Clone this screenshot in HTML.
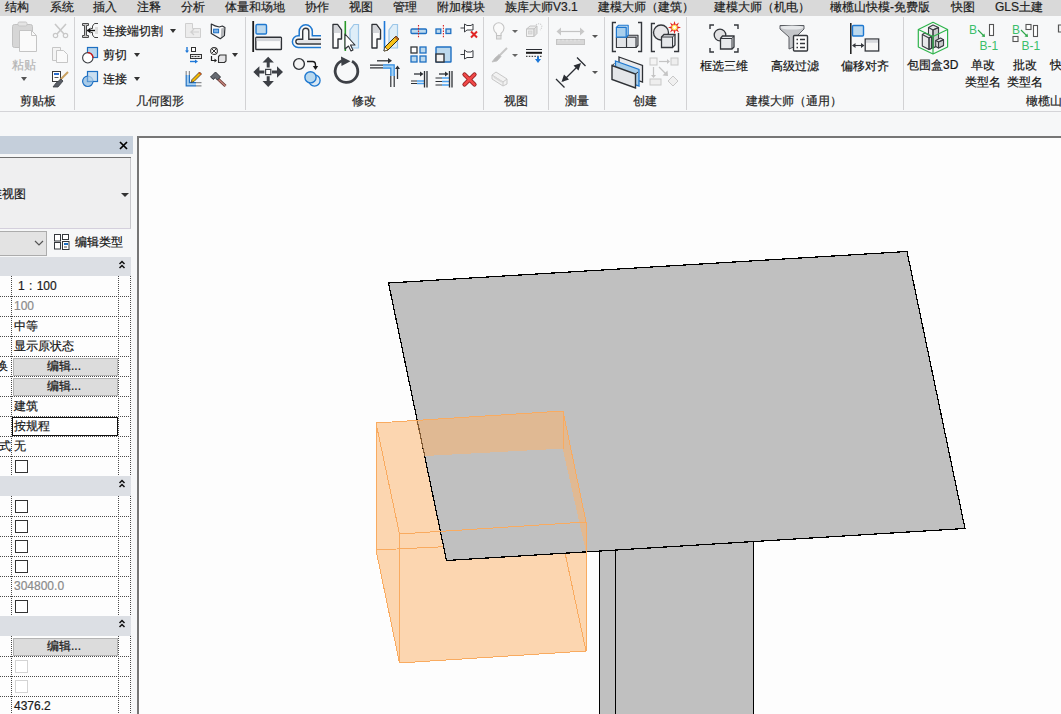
<!DOCTYPE html>
<html><head><meta charset="utf-8">
<style>
html,body{margin:0;padding:0;width:1061px;height:714px;overflow:hidden;background:#f6f7f8;font-family:"Liberation Sans",sans-serif;font-size:12px;color:#222;}
.a{position:absolute;white-space:nowrap;}
#tabs{position:absolute;left:0;top:0;width:1061px;height:16px;background:#d9d9d9;}
.tab{position:absolute;top:0;line-height:14px;font-size:12px;color:#1e1e1e;}
#ribbon{position:absolute;left:0;top:16px;width:1061px;height:95px;background:#f7f8f9;}
#rline{position:absolute;left:0;top:111px;width:1061px;height:1px;background:#d4d4d8;}
.sep{position:absolute;top:17px;width:1px;height:93px;background:#d2d2d4;}
.lbl{position:absolute;top:94px;white-space:nowrap;line-height:14px;font-size:12px;color:#262626;}
.t{position:absolute;white-space:nowrap;line-height:14px;font-size:12px;color:#141414;}
.dd{position:absolute;width:0;height:0;border-left:3.5px solid transparent;border-right:3.5px solid transparent;border-top:4px solid #333;}
svg{position:absolute;overflow:visible;}
.tab,.lbl,.t{-webkit-text-stroke:0.2px currentColor;}
</style></head><body>
<div id="tabs">
<span class="tab" style="left:5px">结构</span>
<span class="tab" style="left:50px">系统</span>
<span class="tab" style="left:93px">插入</span>
<span class="tab" style="left:137px">注释</span>
<span class="tab" style="left:181px">分析</span>
<span class="tab" style="left:225px">体量和场地</span>
<span class="tab" style="left:305px">协作</span>
<span class="tab" style="left:349px">视图</span>
<span class="tab" style="left:393px">管理</span>
<span class="tab" style="left:437px">附加模块</span>
<span class="tab" style="left:505px">族库大师V3.1</span>
<span class="tab" style="left:598px">建模大师（建筑）</span>
<span class="tab" style="left:714px">建模大师（机电）</span>
<span class="tab" style="left:830px">橄榄山快模-免费版</span>
<span class="tab" style="left:951px">快图</span>
<span class="tab" style="left:995px">GLS土建</span>
</div>
<div id="ribbon"></div>
<div id="rline"></div>
<div class="sep" style="left:74px"></div>
<div class="sep" style="left:245px"></div>
<div class="sep" style="left:483px"></div>
<div class="sep" style="left:548px"></div>
<div class="sep" style="left:604px"></div>
<div class="sep" style="left:686px"></div>
<div class="sep" style="left:903px"></div>
<span class="lbl" style="left:20px">剪贴板</span>
<span class="lbl" style="left:136px">几何图形</span>
<span class="lbl" style="left:352px">修改</span>
<span class="lbl" style="left:504px">视图</span>
<span class="lbl" style="left:565px">测量</span>
<span class="lbl" style="left:633px">创建</span>
<span class="lbl" style="left:746px">建模大师（通用）</span>
<span class="lbl" style="left:1026px">橄榄山</span>

<!-- ICONS -->

<!-- clipboard panel -->
<svg style="left:11px;top:21px" width="28" height="32" viewBox="0 0 28 32">
 <rect x="1.5" y="3.5" width="20" height="23" rx="2" fill="#d6d6d6" stroke="#c2c2c2"/>
 <rect x="7" y="1" width="9" height="4" rx="1.5" fill="#e4e4e4" stroke="#c6c6c6"/>
 <path d="M8.5 9.5 H20.5 L25.5 14.5 V30.5 H8.5 Z" fill="#fafafa" stroke="#c4c4c4"/>
 <path d="M20.5 9.5 V14.5 H25.5" fill="none" stroke="#c4c4c4"/>
</svg>
<span class="t" style="left:12px;top:58px;color:#b4b4b4">粘贴</span>
<div class="dd" style="left:21px;top:77px;border-top-color:#555"></div>
<svg style="left:52px;top:22px" width="17" height="17" viewBox="0 0 17 17">
 <path d="M3 2 L12 12 M14 2 L5 12" stroke="#c8c8c8" stroke-width="1.6" fill="none"/>
 <circle cx="3.5" cy="13.5" r="2.2" fill="none" stroke="#c8c8c8" stroke-width="1.2"/>
 <circle cx="13.5" cy="13.5" r="2.2" fill="none" stroke="#c8c8c8" stroke-width="1.2"/>
</svg>
<svg style="left:51px;top:46px" width="18" height="17" viewBox="0 0 18 17">
 <path d="M1.5 1.5 H9.5 V14.5 H1.5 Z" fill="#f4f4f4" stroke="#c6c6c6"/>
 <path d="M5.5 4.5 H12.5 L16.5 8.5 V16.5 H5.5 Z" fill="#fafafa" stroke="#c6c6c6"/>
</svg>
<svg style="left:52px;top:71px" width="17" height="17" viewBox="0 0 17 17">
 <rect x="0.5" y="0.5" width="8" height="10" fill="#fff" stroke="#3a3a3a"/>
 <rect x="2" y="2" width="5" height="2" fill="#2d6fd0"/>
 <path d="M2.5 6.5 H6.5" stroke="#555" stroke-width="1"/>
 <path d="M16 1 L8 9" stroke="#c8a060" stroke-width="2"/>
 <path d="M9 8 L11 10 L6 16 L1 16 L4 12 Z" fill="#5a5e66" stroke="#3a3d42" stroke-width="0.8"/>
</svg>

<!-- geometry panel -->
<svg style="left:82px;top:23px" width="17" height="16" viewBox="0 0 17 16">
 <path d="M0.5 0.5 H6.5 V2.5 H4.5 V12.5 H6.5 V14.5 H0.5 V12.5 H2.5 V2.5 H0.5 Z" fill="#c8c8c8" stroke="#4a4a4a" stroke-width="1"/>
 <path d="M5 7.5 H14" stroke="#111" stroke-width="1.4"/>
 <path d="M5 7.5 L8.5 4.5 V10.5 Z" fill="#111"/>
 <path d="M16 0.5 H12.5 L10.5 3 V5.5 H9 M9 9.5 H10.5 V12 L12.5 14.5 H16" fill="none" stroke="#444" stroke-width="1"/>
 <rect x="13" y="4" width="3" height="7" fill="#dcdcdc"/>
</svg>
<span class="t" style="left:103px;top:24px">连接端切割</span>
<div class="dd" style="left:170px;top:29px"></div>
<svg style="left:82px;top:47px" width="17" height="17" viewBox="0 0 17 17">
 <rect x="5.5" y="0.5" width="10" height="10" fill="#b9d5ec" stroke="#1d6fc2" stroke-width="1.2"/>
 <circle cx="5.8" cy="10.8" r="5.2" fill="#fff" stroke="#3a3d42" stroke-width="1.1"/>
 <path d="M5.8 5.6 A5.2 5.2 0 0 1 11 10.8" fill="none" stroke="#e01010" stroke-width="1.3"/>
</svg>
<span class="t" style="left:103px;top:48px">剪切</span>
<div class="dd" style="left:134px;top:53px"></div>
<svg style="left:82px;top:71px" width="17" height="17" viewBox="0 0 17 17">
 <circle cx="5.8" cy="10.3" r="5.2" fill="#a9cbe8" stroke="#1d6fc2" stroke-width="1.2"/>
 <rect x="5.5" y="0.5" width="10" height="10" fill="#b9d5ec" fill-opacity="0.75" stroke="#1d6fc2" stroke-width="1.2"/>
 <path d="M5.5 5.5 V10.5 H10.9" fill="none" stroke="#6fa6d8" stroke-width="0.8"/>
</svg>
<span class="t" style="left:103px;top:72px">连接</span>
<div class="dd" style="left:134px;top:77px"></div>

<svg style="left:185px;top:23px" width="17" height="16" viewBox="0 0 17 16">
 <path d="M0.5 0.5 H7.5 V5.5 H15.5 V14.5 H0.5 Z" fill="#ececec" stroke="#cfcfcf"/>
 <path d="M14 9 H6 L9 6 M6 9 L9 12" fill="none" stroke="#d0d0d0" stroke-width="1.2"/>
</svg>
<svg style="left:210px;top:23px" width="16" height="17" viewBox="0 0 16 17">
 <path d="M1.3 1 Q5 3.2 9.3 4 L12.3 3 L14.9 4.6 L14.4 12.6 L10.3 15.7 L1.3 10.6 Z" fill="#fbfbfb" stroke="#2e3136" stroke-width="1.2" stroke-linejoin="round"/>
 <path d="M11.2 5.5 L14.2 4.8 L13.8 12.3 L10.8 14.6 Z" fill="#b4b6ba"/>
 <rect x="3.6" y="6.2" width="5" height="3.6" fill="#7fb2e6" stroke="#1e6fc2" stroke-width="1"/>
</svg>
<svg style="left:185px;top:47px" width="17" height="16" viewBox="0 0 17 16">
 <path d="M2 0 V5" stroke="#1e78d8" stroke-width="1.4"/><path d="M0 3.5 L2 6 L4 3.5 Z" fill="#1e78d8"/>
 <rect x="6.5" y="0.5" width="4" height="4" fill="#fff" stroke="#333"/>
 <rect x="5.5" y="7.5" width="11" height="4" fill="#e8e8e8" stroke="#333"/>
 <path d="M6.5 9.5 H15.5" stroke="#333" stroke-dasharray="2 1"/>
 <path d="M5 14.5 H11" stroke="#1e78d8" stroke-width="1.4"/><path d="M10 12.5 L13 14.5 L10 16.5 Z" fill="#1e78d8"/>
</svg>
<svg style="left:210px;top:47px" width="17" height="16" viewBox="0 0 17 16">
 <circle cx="4" cy="4" r="3.4" fill="#fff" stroke="#333" stroke-width="1.1"/>
 <path d="M2 2 L6 6 M6 2 L2 6" stroke="#333" stroke-width="1"/>
 <path d="M1.5 9 V13.5 H5" fill="none" stroke="#222" stroke-width="1.2"/><path d="M4.5 11.5 L7 13.5 L4.5 15.5 Z" fill="#222"/>
 <path d="M8.5 9.5 L10 8 H16 V14 L14.5 15.5 H8.5 Z" fill="#e4e4e6" stroke="#333" stroke-width="1.1"/>
</svg>
<div class="dd" style="left:232px;top:53px"></div>
<svg style="left:185px;top:71px" width="17" height="16" viewBox="0 0 17 16">
 <path d="M2.75 4 V13.25 H11" fill="none" stroke="#a8d0f0" stroke-width="2.4"/>
 <path d="M1.2 4 V14.8 H11 M4.4 4 V11.6 H11" fill="none" stroke="#1e6fc2" stroke-width="1.2"/>
 <path d="M1.2 0 V4 M4.4 0 V4 M11 11.6 H16.5 M11 14.8 H16.5" stroke="#8a8c90" stroke-width="1.2"/>
 <path d="M14.5 1 L16.5 3 L9 10.5 L6 11.5 L7 8.5 Z" fill="#f5b800" stroke="#3a3a3a" stroke-width="0.8"/>
 <path d="M14.5 1 L16.5 3 L15.5 4 L13.5 2 Z" fill="#d0501a"/>
</svg>
<svg style="left:210px;top:71px" width="17" height="16" viewBox="0 0 17 16">
 <path d="M7.5 7.5 L15.5 15" stroke="#6a3a34" stroke-width="3"/>
 <path d="M7.5 7.5 L15.5 15" stroke="#c88880" stroke-width="1.2"/>
 <path d="M0.5 6 L5.5 1 L10.5 6 L7.5 9 L5 6.5 L3.5 8.5 Z" fill="#676b72" stroke="#33363b" stroke-width="1"/>
</svg>



<!-- modify panel -->
<svg style="left:250px;top:20px" width="34" height="33" viewBox="0 0 34 33">
 <path d="M3.2 1 V32" stroke="#1a1a1a" stroke-width="1.8"/>
 <rect x="6" y="4.5" width="10.5" height="9.5" rx="1.2" fill="#bcd9ee" stroke="#1e78d0" stroke-width="1.4"/>
 <rect x="5.8" y="17.3" width="25.6" height="12.2" rx="0.8" fill="#fbfbfb" stroke="#2e3136" stroke-width="1.4"/>
 <rect x="6.6" y="18.1" width="24" height="3" fill="#d4d6da"/>
</svg>
<svg style="left:290px;top:23.5px" width="34" height="28" viewBox="0 0 34 28">
 <path d="M31 17.6 H8" stroke="#e2e3e6" stroke-width="3"/>
 <path d="M31 11.8 H22.3 V7.3 A6.55 6.55 0 0 0 9.2 7.3 V11.8 H8.25 A5.85 5.85 0 0 0 8.25 23.5 H31" fill="none" stroke="#1e78d0" stroke-width="1.5"/>
 <path d="M31 15.2 H18.8 V7.25 A3.05 3.05 0 0 0 12.7 7.25 V15.2 H8.25 A2.4 2.4 0 0 0 8.25 20 H31" fill="none" stroke="#34373c" stroke-width="1.4"/>
</svg>
<svg style="left:330px;top:20px" width="32" height="33" viewBox="0 0 32 33">
 <path d="M3 4.5 H7.5 L11.5 10 V19 H8 V28 H3 Z" fill="#fcfcfc" stroke="#2e3136" stroke-width="1.4" stroke-linejoin="round"/>
 <path d="M3.8 5.3 H7.2 L10.7 10.3 V13 H3.8 Z" fill="#d4d6da"/>
 <path d="M15.3 1 V31" stroke="#2a9a2a" stroke-width="1.6"/>
 <path d="M28.5 4.5 H24 L20 10 V28 H28.5 Z" fill="#dfeef8" stroke="#9cc6e8" stroke-width="1.2"/>
 <path d="M15 14 V29 L18.5 26 L21 31 L23 30 L20.5 25 H25 Z" fill="#fff" stroke="#2e3136" stroke-width="1.1" stroke-linejoin="round"/>
</svg>
<svg style="left:369px;top:20px" width="32" height="33" viewBox="0 0 32 33">
 <path d="M3 4.5 H7.5 L11.5 10 V19 H8 V28 H3 Z" fill="#fcfcfc" stroke="#2e3136" stroke-width="1.4" stroke-linejoin="round"/>
 <path d="M3.8 5.3 H7.2 L10.7 10.3 V13 H3.8 Z" fill="#d4d6da"/>
 <path d="M15.5 1 V31" stroke="#1e78d8" stroke-width="1.6"/>
 <path d="M28.5 4.5 H24 L20 10 V28 H28.5 Z" fill="#dfeef8" stroke="#9cc6e8" stroke-width="1.2"/>
 <path d="M27 16 L30 19 L19 30 L15 31 L16 27 Z" fill="#f7c21a" stroke="#3a2e10" stroke-width="1"/>
 <path d="M27 16 L30 19 L28.5 20.5 L25.5 17.5 Z" fill="#b5652a"/>
 <path d="M16 27 L19 30 L15 31 Z" fill="#fff" stroke="#3a2e10" stroke-width="0.6"/>
</svg>
<svg style="left:252px;top:56px" width="32" height="32" viewBox="0 0 32 32">
 <path d="M16.2 0.8 L21.9 6.6 H17.7 V11.6 H14.7 V6.6 H10.5 Z M16.2 31 L21.9 25 H17.7 V20.3 H14.7 V25 H10.5 Z M1.3 16 L7.4 10.3 V14.5 H12.4 V17.5 H7.4 V21.7 Z M31 16 L25 10.3 V14.5 H20 V17.5 H25 V21.7 Z" fill="#3d4046"/>
 <rect x="13.6" y="13.4" width="5.2" height="5.2" fill="#fff" stroke="#3d4046" stroke-width="1.2"/>
</svg>
<svg style="left:291px;top:57px" width="32" height="31" viewBox="0 0 32 31">
 <circle cx="8" cy="7" r="5.4" fill="#f4f4f4" stroke="#2e3136" stroke-width="1.4"/>
 <path d="M16 4.5 H21.5 Q24.5 4.5 24.5 8 V10" fill="none" stroke="#1a1a1a" stroke-width="1.4"/>
 <path d="M21.8 9 L24.5 13 L27.2 9 Z" fill="#1a1a1a"/>
 <circle cx="23.5" cy="23.5" r="5.6" fill="#dbe8f2" stroke="#1e78d0" stroke-width="1.3"/>
 <circle cx="19.5" cy="20.3" r="5.6" fill="#b8d8ee" stroke="#1e78d0" stroke-width="1.4"/>
</svg>
<svg style="left:331px;top:55px" width="32" height="32" viewBox="0 0 32 32">
 <path d="M21 6.3 A11.3 11.3 0 1 1 11 5.8" fill="none" stroke="#3d4046" stroke-width="2.8"/>
 <path d="M10 1.5 L19.5 6.2 L10.5 11 Z" fill="#3d4046"/>
</svg>
<svg style="left:369px;top:57px" width="32" height="31" viewBox="0 0 32 31">
 <path d="M8 3.8 H20" stroke="#2e3136" stroke-width="1.3"/><path d="M19 1 L23 3.8 L19 6.6 Z" fill="#2e3136"/>
 <path d="M1 8.2 H14 M1 10.8 H14" stroke="#2e3136" stroke-width="1.2"/>
 <path d="M14 9.5 H23.5 V19" fill="none" stroke="#a6d2f4" stroke-width="3"/>
 <path d="M14 7.8 H25.2 V19 M14 11.2 H21.8 V19" fill="none" stroke="#2a88e0" stroke-width="1.2"/>
 <path d="M21.8 19 V30 M25.2 19 V30" stroke="#2e3136" stroke-width="1.2"/>
 <path d="M28.5 22 V10.5" stroke="#2e3136" stroke-width="1.3"/><path d="M26 12 L28.5 8.5 L31 12 Z" fill="#2e3136"/>
</svg>

<svg style="left:410px;top:25px" width="18" height="13" viewBox="0 0 18 13">
 <rect x="1" y="4" width="15.5" height="4.5" rx="1" fill="#bcd9ee" stroke="#1e6fc2" stroke-width="1.3"/>
 <path d="M8.5 0 V13" stroke="#d82020" stroke-width="1.1" stroke-dasharray="1.5 1.2"/>
</svg>
<svg style="left:435px;top:25px" width="18" height="13" viewBox="0 0 18 13">
 <rect x="1" y="4" width="4.8" height="4.5" fill="#bcd9ee" stroke="#1e6fc2" stroke-width="1.3"/>
 <rect x="11" y="4" width="4.8" height="4.5" fill="#bcd9ee" stroke="#1e6fc2" stroke-width="1.3"/>
 <path d="M8.4 0 V13" stroke="#d82020" stroke-width="1.1" stroke-dasharray="1.5 1.2"/>
</svg>
<svg style="left:460px;top:22px" width="18" height="17" viewBox="0 0 18 17">
 <path d="M0.5 6 H4.5 M4.5 2 V10 L7 8 H13 V2 L11 3.5 H7 Z" fill="#fff" stroke="#3a3d42" stroke-width="1"/>
 <path d="M11 9.5 L17 15.5 M17 9.5 L11 15.5" stroke="#e02424" stroke-width="2"/>
</svg>
<svg style="left:410px;top:46px" width="18" height="17" viewBox="0 0 18 17">
 <rect x="1" y="1" width="6" height="6" fill="#fff" stroke="#33363b" stroke-width="1.3"/>
 <rect x="10" y="1" width="6" height="6" fill="#bcd9ee" stroke="#1e6fc2" stroke-width="1.3"/>
 <rect x="1" y="10" width="6" height="6" fill="#bcd9ee" stroke="#1e6fc2" stroke-width="1.3"/>
 <rect x="10" y="10" width="6" height="6" fill="#bcd9ee" stroke="#1e6fc2" stroke-width="1.3"/>
</svg>
<svg style="left:435px;top:46px" width="18" height="17" viewBox="0 0 18 17">
 <rect x="1" y="1" width="15" height="15" rx="0.5" fill="#bcd9ee" stroke="#1e6fc2" stroke-width="1.4"/>
 <rect x="1" y="8" width="8" height="8" fill="#f2f2f2" stroke="#33363b" stroke-width="1.4"/>
</svg>
<svg style="left:460px;top:49px" width="18" height="13" viewBox="0 0 18 13">
 <path d="M0.5 5.5 H4.5 M4.5 1 V10 L7 8.5 H13 V1.5 L11 3 H7 Z" fill="#fff" stroke="#3a3d42" stroke-width="1"/>
</svg>
<svg style="left:410px;top:71px" width="18" height="17" viewBox="0 0 18 17">
 <path d="M4 3 H11" stroke="#2e3136" stroke-width="1.3"/><path d="M10 0.5 L13.5 3 L10 5.5 Z" fill="#2e3136"/>
 <path d="M1 10 H7 M1 12.5 H7" stroke="#2e3136" stroke-width="1.2"/>
 <path d="M7 10 H14 M7 12.5 H14" stroke="#4aa0f0" stroke-width="1.6"/>
 <path d="M14.5 0 V16.5 M17 0 V16.5" stroke="#2e3136" stroke-width="1.3"/>
</svg>
<svg style="left:435px;top:71px" width="18" height="17" viewBox="0 0 18 17">
 <path d="M4 3 H11" stroke="#2e3136" stroke-width="1.3"/><path d="M10 0.5 L13.5 3 L10 5.5 Z" fill="#2e3136"/>
 <path d="M0.5 7 H7 M0.5 10.5 H7 M0.5 14 H7" stroke="#2e3136" stroke-width="1.2"/>
 <path d="M7 7 H14 M7 10.5 H14 M7 14 H14" stroke="#4aa0f0" stroke-width="1.6"/>
 <path d="M14.5 0 V16.5 M17 0 V16.5" stroke="#2e3136" stroke-width="1.3"/>
</svg>
<svg style="left:462px;top:72px" width="15" height="15" viewBox="0 0 15 15">
 <path d="M2.5 2.5 L12.5 12.5 M12.5 2.5 L2.5 12.5" stroke="#8a1a1a" stroke-width="4.2" stroke-linecap="round"/>
 <path d="M2.5 2.5 L12.5 12.5 M12.5 2.5 L2.5 12.5" stroke="#f04848" stroke-width="2.6" stroke-linecap="round"/>
</svg>


<!-- view panel -->
<svg style="left:492px;top:22px" width="14" height="18" viewBox="0 0 14 18">
 <path d="M4.5 11.5 Q1.5 9 1.5 6 A5.2 5.2 0 0 1 12 6 Q12 9 9 11.5 V13.5 H4.5 Z" fill="#fafafa" stroke="#c4c4c4" stroke-width="1.1"/>
 <rect x="4.5" y="13.5" width="4.5" height="3.5" fill="#e4e4e4" stroke="#c4c4c4"/>
</svg>
<div class="dd" style="left:512px;top:30px;border-left-width:3px;border-right-width:3px;border-top-width:3.5px;border-top-color:#666"></div>
<svg style="left:525px;top:22px" width="18" height="16" viewBox="0 0 18 16">
 <path d="M1.5 7 L5 4 H12 L9 7 Z" fill="#ececec" stroke="#c4c4c4"/>
 <path d="M1.5 7 H9 V14.5 H1.5 Z" fill="#f2f2f2" stroke="#c4c4c4"/>
 <path d="M9 7 L12 4 V11.5 L9 14.5 Z" fill="#dedede" stroke="#c4c4c4"/>
 <rect x="3.5" y="9" width="3.5" height="3" fill="#e0e0e0" stroke="#cfcfcf" stroke-width="0.8"/>
 <path d="M11 3 Q14 0.5 16.5 3 Q17.5 6 15 8" fill="none" stroke="#cfcfcf" stroke-width="1.2" stroke-dasharray="1.2 1"/>
</svg>
<svg style="left:491px;top:47px" width="17" height="16" viewBox="0 0 17 16">
 <path d="M16 1 L8 9" stroke="#c6c6c6" stroke-width="2"/>
 <path d="M8 7.5 L10 9.5 L6 14 L1 15 L4 11 Z" fill="#b8b8b8" stroke="#c0c0c0" stroke-width="0.8"/>
</svg>
<div class="dd" style="left:512px;top:54px;border-left-width:3px;border-right-width:3px;border-top-width:3.5px;border-top-color:#666"></div>
<svg style="left:525px;top:48px" width="18" height="16" viewBox="0 0 18 16">
 <path d="M1 1.5 H17" stroke="#2a2d33" stroke-width="1"/>
 <path d="M1 4.8 H17" stroke="#1a1a1a" stroke-width="2"/>
 <path d="M1 8.3 H17" stroke="#1a1a1a" stroke-width="1" stroke-dasharray="1.5 1.3"/>
 <path d="M13 8.5 V12" stroke="#1e78d8" stroke-width="2"/><path d="M10 11 L13 15 L16 11 Z" fill="#1e78d8"/>
</svg>
<svg style="left:491px;top:70px" width="17" height="17" viewBox="0 0 17 17">
 <path d="M1 5 L5 2 L16 9 V14 L12 16 L1 9 Z" fill="#f2f2f2" stroke="#c8c8c8"/>
 <path d="M1 5 L12 12 V16 M12 12 L16 9" fill="none" stroke="#c8c8c8"/>
 <path d="M3 7 L11 12" stroke="#dadada" stroke-width="2"/>
</svg>

<!-- measure -->
<svg style="left:555px;top:26px" width="32" height="20" viewBox="0 0 32 20">
 <path d="M4 5.5 H27" stroke="#c4c4c4" stroke-width="1.2"/>
 <path d="M1.5 5.5 L6 1.5 V9.5 Z M29.5 5.5 L25 1.5 V9.5 Z" fill="#c8c8c8"/>
 <rect x="1.5" y="13.5" width="28" height="5" fill="#d8d8d8" stroke="#c4c4c4"/>
 <path d="M4 13.5 V15.5 M8 13.5 V15 M12 13.5 V15.5 M16 13.5 V15 M20 13.5 V15.5 M24 13.5 V15" stroke="#eee" stroke-width="0.8"/>
</svg>
<div class="dd" style="left:592px;top:35px;border-left-width:3px;border-right-width:3px;border-top-width:3.5px;border-top-color:#555"></div>
<svg style="left:555px;top:56px" width="32" height="32" viewBox="0 0 32 32">
 <path d="M22 1.5 L30.5 10 M1 23 L9.5 31.5" stroke="#2a2d33" stroke-width="1.3"/>
 <path d="M8 25 L24.5 8.5" stroke="#2a2d33" stroke-width="1.3"/>
 <path d="M26 7 L18.5 9.5 L23.5 14.5 Z M6.5 26 L14 23.5 L9 18.5 Z" fill="#2a2d33"/>
</svg>
<div class="dd" style="left:592px;top:71px;border-left-width:3px;border-right-width:3px;border-top-width:3.5px;border-top-color:#555"></div>

<!-- create -->
<svg style="left:611px;top:21px" width="32" height="32" viewBox="0 0 32 32">
 <path d="M5 1.5 H1.5 V30.5 H5 M27 1.5 H30.5 V30.5 H27" fill="none" stroke="#34373c" stroke-width="1.4"/>
 <g stroke-linejoin="round">
 <path d="M15.5 16.2 L17.5 14.2 H27 V24.5 L25 26.5 Z" fill="#c9cbcf" stroke="#34373c" stroke-width="1.1"/>
 <rect x="15.5" y="16.2" width="9.5" height="10.3" fill="#e6e8eb" stroke="#34373c" stroke-width="1.1"/>
 <rect x="5.4" y="16.2" width="10.1" height="10.3" fill="#e2e4e7" stroke="#34373c" stroke-width="1.1"/>
 <path d="M5.4 6.3 L7.4 4.3 H17.2 V14.2 L15.2 16.2 Z" fill="#c4def2" stroke="#1e78d0" stroke-width="1.1"/>
 <rect x="5.4" y="6.3" width="9.8" height="9.9" fill="#a9cfec" stroke="#1e78d0" stroke-width="1.2"/>
 </g>
</svg>
<svg style="left:650px;top:20px" width="32" height="33" viewBox="0 0 32 33">
 <path d="M5 3.5 H1.5 V31.5 H5 M24 31.5 H28.5 V13" fill="none" stroke="#34373c" stroke-width="1.4"/>
 <circle cx="11" cy="12.5" r="7.5" fill="#e6e6e8" stroke="#34373c" stroke-width="1.3"/>
 <path d="M11.5 17 L14 14.5 H25 V25 L22.5 27.5 H11.5 Z" fill="#e6e8eb" stroke="#34373c" stroke-width="1.3"/>
 <path d="M11.5 17 H22.5 V27.5 M22.5 17 L25 14.5" fill="none" stroke="#34373c" stroke-width="1"/>
 <path d="M24.5 1 L25.7 4.8 L29 2.5 L27.2 6.2 L31 7.5 L27.2 8.8 L29 12.5 L25.7 10.2 L24.5 14 L23.3 10.2 L20 12.5 L21.8 8.8 L18 7.5 L21.8 6.2 L20 2.5 L23.3 4.8 Z" fill="#e8201a"/>
 <circle cx="24.5" cy="7.5" r="2.8" fill="#ffe860"/>
 <circle cx="24.5" cy="7.5" r="1.4" fill="#fff"/>
</svg>
<svg style="left:610px;top:56px" width="34" height="33" viewBox="0 0 34 33">
 <path d="M9 1 L32.5 9.5 V26 L9 17.5 Z" fill="#e9eaed" stroke="#2e3136" stroke-width="1.3"/>
 <path d="M5.5 5 L29 13.5 V30 L5.5 21.5 Z" fill="#a9cde8" stroke="#1e78d0" stroke-width="1.3"/>
 <path d="M2 9.5 L25.5 18 V32 L2 23.5 Z" fill="#e4e6e9" stroke="#2e3136" stroke-width="1.4"/>
 <path d="M2 9.5 L4.5 7.5 M25.5 18 L28 16" stroke="#2e3136" stroke-width="1"/>
</svg>
<svg style="left:649px;top:57px" width="31" height="30" viewBox="0 0 31 30">
 <rect x="1" y="1" width="7" height="7" fill="#f4f4f4" stroke="#c8c8c8"/>
 <rect x="22" y="1" width="7" height="7" fill="#eeeeee" stroke="#c8c8c8"/>
 <path d="M10 4.5 H19" stroke="#c4c4c4" stroke-width="1.2"/><path d="M18 2 L21 4.5 L18 7 Z" fill="#c4c4c4"/>
 <path d="M4.5 10 V19" stroke="#c4c4c4" stroke-width="1.2"/><path d="M2 18 L4.5 21 L7 18 Z" fill="#c4c4c4"/>
 <path d="M10 10 L17 17" stroke="#c4c4c4" stroke-width="1.2"/><path d="M18.5 13.5 L19 19 L13.5 18.5 Z" fill="#c4c4c4"/>
 <rect x="1" y="22" width="11" height="6" fill="#eeeeee" stroke="#c8c8c8"/>
 <path d="M24 19 L29 24 L24 29 L19 24 Z" fill="#f0f0f0" stroke="#c8c8c8"/>
</svg>

<!-- jianmo dashi -->
<svg style="left:709px;top:24px" width="30" height="29" viewBox="0 0 30 29">
 <path d="M1 5 V1 H5 M25 1 H29 V5 M1 24 V28 H5 M25 28 H29 V24" fill="none" stroke="#34373c" stroke-width="1.4"/>
 <circle cx="11" cy="11" r="5.8" fill="#e2e2e4" stroke="#34373c" stroke-width="1.3"/>
 <path d="M11.5 14.5 L13.5 12 H25 V23 L23 25 H11.5 Z" fill="#e8eaed" stroke="#34373c" stroke-width="1.3"/>
 <path d="M11.5 14.5 H23 V25 M23 14.5 L25 12" fill="none" stroke="#34373c" stroke-width="1"/>
</svg>
<svg style="left:779px;top:24px" width="30" height="28" viewBox="0 0 30 28">
 <path d="M1 1.5 H25 V5 L17 13 V22 L10 25 V13 L1 5 Z" fill="#c4c6ca" stroke="#5a5d62" stroke-width="1"/>
 <ellipse cx="13" cy="3.5" rx="11.5" ry="2" fill="#e6e8ea"/>
 <rect x="14.5" y="11.5" width="14" height="15.5" rx="1" fill="#fcfcfc" stroke="#34373c" stroke-width="1.4"/>
 <path d="M17.5 15.5 H19 M21 15.5 H26 M17.5 19.5 H19 M21 19.5 H26 M17.5 23.5 H19 M21 23.5 H26" stroke="#34373c" stroke-width="1.3"/>
</svg>
<svg style="left:849px;top:23px" width="31" height="31" viewBox="0 0 31 31">
 <path d="M1.8 0 V31" stroke="#1a1a1a" stroke-width="1.5"/>
 <rect x="3.5" y="2.5" width="11" height="10.5" rx="1" fill="#bcd9ee" stroke="#1e78d0" stroke-width="1.4"/>
 <rect x="16.2" y="16" width="13.5" height="12" fill="#f6f6f6" stroke="#34373c" stroke-width="1.3"/>
 <rect x="17" y="16.8" width="12" height="3" fill="#d6d8dc"/>
 <path d="M4 22.5 H14.5" stroke="#34373c" stroke-width="1.1"/>
 <path d="M3 22.5 L6.5 20 V25 Z M15.5 22.5 L12 20 V25 Z" fill="#34373c"/>
</svg>
<span class="t" style="left:700px;top:58.5px">框选三维</span>
<span class="t" style="left:771px;top:58.5px">高级过滤</span>
<span class="t" style="left:841px;top:58.5px">偏移对齐</span>

<!-- ganlanshan -->
<svg style="left:914px;top:20px" width="38" height="36" viewBox="0 0 38 36">
 <g stroke="#3a3d42" stroke-width="1.1" stroke-linejoin="round">
 <path d="M14.5 7.5 L19 5 L24.5 7.5 V25 L19 28 L14.5 25.5 Z" fill="#e6e6e8"/>
 <path d="M19 10 L24.5 7.5 V25 L19 28 Z" fill="#c9cacd"/>
 <path d="M14.5 7.5 L19 10 L24.5 7.5 M19 10 V28" fill="none"/>
 <path d="M8.3 14.5 L11 12.9 L17.6 16.5 V28.2 L15 29.5 L8.3 26 Z" fill="#e8e8ea"/>
 <path d="M15 18 L17.6 16.5 V28.2 L15 29.5 Z" fill="#cfd0d3"/>
 <path d="M8.3 14.5 L15 18 L17.6 16.5 M15 18 V29.5" fill="none"/>
 <path d="M21.7 20.5 L26.5 18.1 L29.5 19.7 V25.5 L24.5 28 L21.7 26.5 Z" fill="#e4e4e6"/>
 <path d="M24.5 22 L29.5 19.7 V25.5 L24.5 28 Z" fill="#c8c9cc"/>
 <path d="M21.7 20.5 L24.5 22 L29.5 19.7 M24.5 22 V28" fill="none"/>
 </g>
 <g stroke="#2fb44c" stroke-width="1.2" fill="none" stroke-linejoin="round">
 <path d="M19 2.3 L33.6 9.5 V27 L19 34 L4.3 27 V9.5 Z"/>
 <path d="M4.3 9.5 L19 16.5 L33.6 9.5 M19 16.5 V34"/>
 </g>
</svg>
<span class="t" style="left:907px;top:58px">包围盒3D</span>
<svg style="left:968px;top:23px" width="30" height="28" viewBox="0 0 30 28">
 <text x="1" y="10.5" font-family="Liberation Sans" font-size="12" fill="#3bbf6a">B</text>
 <path d="M10 7 L16 13" stroke="#2ea84a" stroke-width="1.1"/><path d="M13.5 13.5 L17 14 L16.5 10.5 Z" fill="#2ea84a"/>
 <rect x="21.5" y="1.5" width="4" height="11" fill="#fff" stroke="#555" stroke-width="1.1"/>
 <text x="11.5" y="26.5" font-family="Liberation Sans" font-size="12" fill="#3bbf6a">B-1</text>
</svg>
<svg style="left:1011px;top:23px" width="30" height="28" viewBox="0 0 30 28">
 <text x="1" y="10.5" font-family="Liberation Sans" font-size="12" fill="#3bbf6a">B</text>
 <path d="M10 7 L16 13" stroke="#2ea84a" stroke-width="1.1"/><path d="M13.5 13.5 L17 14 L16.5 10.5 Z" fill="#2ea84a"/>
 <rect x="15" y="1.5" width="5" height="5" fill="#fff" stroke="#555" stroke-width="1.1"/>
 <rect x="2" y="13.5" width="5" height="5" fill="#fff" stroke="#555" stroke-width="1.1"/>
 <rect x="22.5" y="2.5" width="4" height="11" fill="#fff" stroke="#555" stroke-width="1.1"/>
 <text x="10.5" y="26.5" font-family="Liberation Sans" font-size="12" fill="#3bbf6a">B-1</text>
</svg>
<span class="t" style="left:971px;top:58px">单改</span>
<span class="t" style="left:965px;top:75px">类型名</span>
<span class="t" style="left:1013px;top:58px">批改</span>
<span class="t" style="left:1007px;top:75px">类型名</span>
<span class="t" style="left:1050px;top:58px">快</span>
<svg style="left:1056px;top:24px" width="6" height="10" viewBox="0 0 6 10"><path d="M5.5 1 H2.5 V8 H6" fill="none" stroke="#555" stroke-width="1.2"/></svg>

<!-- PROPERTIES -->
<div id="props"><div class="a" style="left:0;top:136px;width:133px;height:18px;background:#c5cfdb"></div>
<svg style="left:119px;top:141px" width="9" height="9" viewBox="0 0 9 9"><path d="M1 1 L8 8 M8 1 L1 8" stroke="#000" stroke-width="1.7"/></svg>
<div class="a" style="left:0;top:157px;width:131px;height:1px;background:#707070"></div>
<div class="a" style="left:0;top:158px;width:131px;height:71px;background:#efeff0;border-right:1px solid #c8c8cc;border-bottom:1px solid #d4cfdc;box-sizing:border-box"></div>
<div class="a" style="left:0;top:185px;width:30px;height:16px;overflow:hidden"><span class="t" style="left:-22px;top:2px;color:#1a1a1a">三维视图</span></div>
<div class="dd" style="left:121px;top:193px;border-left-width:4px;border-right-width:4px;border-top-width:4px;border-top-color:#333"></div>
<div class="a" style="left:-1px;top:231px;width:48px;height:25px;background:#e3e3e3;border:1px solid #acacac;box-sizing:border-box"></div>
<svg style="left:34px;top:240px" width="10" height="7" viewBox="0 0 10 7"><path d="M1 1 L5 5 L9 1" fill="none" stroke="#555" stroke-width="1.2"/></svg>
<svg style="left:54px;top:234px" width="16" height="16" viewBox="0 0 16 16"><rect x="0.5" y="0.5" width="6" height="6.5" fill="#fff" stroke="#33363b"/><rect x="0.5" y="8.5" width="6" height="6.5" fill="#fff" stroke="#33363b"/><rect x="8.5" y="0.5" width="6" height="5" fill="#fff" stroke="#33363b"/><rect x="8.5" y="7.5" width="6.5" height="8" fill="#fff" stroke="#33363b"/><rect x="10" y="9" width="4" height="2" fill="#1e6fc2"/><path d="M10 13 H13" stroke="#555"/></svg>
<span class="t" style="left:75px;top:235px;color:#111">编辑类型</span>
<div class="a" style="left:0;top:257px;width:131px;height:20px;background:#dcdfe4"></div><svg style="left:118px;top:260px" width="8" height="10" viewBox="0 0 8 10"><path d="M1.5 4 L4 1.5 L6.5 4 M1.5 8 L4 5.5 L6.5 8" fill="none" stroke="#111" stroke-width="1.5"/></svg>
<div class="a" style="left:0;top:276px;width:131px;height:438px;background:#fdfdfd"></div>
<svg style="left:0;top:0" width="138" height="714" viewBox="0 0 138 714">
<path d="M0 296.5 H131" stroke="#4a4a4a" stroke-width="1" stroke-dasharray="1 1"/>
<path d="M11.5 276 V296 M118.5 276 V296 M130.5 276 V296" stroke="#4a4a4a" stroke-width="1" stroke-dasharray="1 1"/>
<path d="M0 316.5 H131" stroke="#4a4a4a" stroke-width="1" stroke-dasharray="1 1"/>
<path d="M11.5 296 V316 M118.5 296 V316 M130.5 296 V316" stroke="#4a4a4a" stroke-width="1" stroke-dasharray="1 1"/>
<path d="M0 336.5 H131" stroke="#4a4a4a" stroke-width="1" stroke-dasharray="1 1"/>
<path d="M11.5 316 V336 M118.5 316 V336 M130.5 316 V336" stroke="#4a4a4a" stroke-width="1" stroke-dasharray="1 1"/>
<path d="M0 356.5 H131" stroke="#4a4a4a" stroke-width="1" stroke-dasharray="1 1"/>
<path d="M11.5 336 V356 M118.5 336 V356 M130.5 336 V356" stroke="#4a4a4a" stroke-width="1" stroke-dasharray="1 1"/>
<path d="M0 376.5 H131" stroke="#4a4a4a" stroke-width="1" stroke-dasharray="1 1"/>
<path d="M11.5 356 V376 M118.5 356 V376 M130.5 356 V376" stroke="#4a4a4a" stroke-width="1" stroke-dasharray="1 1"/>
<path d="M0 396.5 H131" stroke="#4a4a4a" stroke-width="1" stroke-dasharray="1 1"/>
<path d="M11.5 376 V396 M118.5 376 V396 M130.5 376 V396" stroke="#4a4a4a" stroke-width="1" stroke-dasharray="1 1"/>
<path d="M0 416.5 H131" stroke="#4a4a4a" stroke-width="1" stroke-dasharray="1 1"/>
<path d="M11.5 396 V416 M118.5 396 V416 M130.5 396 V416" stroke="#4a4a4a" stroke-width="1" stroke-dasharray="1 1"/>
<path d="M0 436.5 H131" stroke="#4a4a4a" stroke-width="1" stroke-dasharray="1 1"/>
<path d="M11.5 416 V436 M118.5 416 V436 M130.5 416 V436" stroke="#4a4a4a" stroke-width="1" stroke-dasharray="1 1"/>
<path d="M0 456.5 H131" stroke="#4a4a4a" stroke-width="1" stroke-dasharray="1 1"/>
<path d="M11.5 436 V456 M118.5 436 V456 M130.5 436 V456" stroke="#4a4a4a" stroke-width="1" stroke-dasharray="1 1"/>
<path d="M0 476.5 H131" stroke="#4a4a4a" stroke-width="1" stroke-dasharray="1 1"/>
<path d="M11.5 456 V476 M118.5 456 V476 M130.5 456 V476" stroke="#4a4a4a" stroke-width="1" stroke-dasharray="1 1"/>
<path d="M0 516.5 H131" stroke="#4a4a4a" stroke-width="1" stroke-dasharray="1 1"/>
<path d="M11.5 496 V516 M118.5 496 V516 M130.5 496 V516" stroke="#4a4a4a" stroke-width="1" stroke-dasharray="1 1"/>
<path d="M0 536.5 H131" stroke="#4a4a4a" stroke-width="1" stroke-dasharray="1 1"/>
<path d="M11.5 516 V536 M118.5 516 V536 M130.5 516 V536" stroke="#4a4a4a" stroke-width="1" stroke-dasharray="1 1"/>
<path d="M0 556.5 H131" stroke="#4a4a4a" stroke-width="1" stroke-dasharray="1 1"/>
<path d="M11.5 536 V556 M118.5 536 V556 M130.5 536 V556" stroke="#4a4a4a" stroke-width="1" stroke-dasharray="1 1"/>
<path d="M0 576.5 H131" stroke="#4a4a4a" stroke-width="1" stroke-dasharray="1 1"/>
<path d="M11.5 556 V576 M118.5 556 V576 M130.5 556 V576" stroke="#4a4a4a" stroke-width="1" stroke-dasharray="1 1"/>
<path d="M0 596.5 H131" stroke="#4a4a4a" stroke-width="1" stroke-dasharray="1 1"/>
<path d="M11.5 576 V596 M118.5 576 V596 M130.5 576 V596" stroke="#4a4a4a" stroke-width="1" stroke-dasharray="1 1"/>
<path d="M0 616.5 H131" stroke="#4a4a4a" stroke-width="1" stroke-dasharray="1 1"/>
<path d="M11.5 596 V616 M118.5 596 V616 M130.5 596 V616" stroke="#4a4a4a" stroke-width="1" stroke-dasharray="1 1"/>
<path d="M0 656.5 H131" stroke="#4a4a4a" stroke-width="1" stroke-dasharray="1 1"/>
<path d="M11.5 636 V656 M118.5 636 V656 M130.5 636 V656" stroke="#4a4a4a" stroke-width="1" stroke-dasharray="1 1"/>
<path d="M0 676.5 H131" stroke="#4a4a4a" stroke-width="1" stroke-dasharray="1 1"/>
<path d="M11.5 656 V676 M118.5 656 V676 M130.5 656 V676" stroke="#4a4a4a" stroke-width="1" stroke-dasharray="1 1"/>
<path d="M0 696.5 H131" stroke="#4a4a4a" stroke-width="1" stroke-dasharray="1 1"/>
<path d="M11.5 676 V696 M118.5 676 V696 M130.5 676 V696" stroke="#4a4a4a" stroke-width="1" stroke-dasharray="1 1"/>
<path d="M0 716.5 H131" stroke="#4a4a4a" stroke-width="1" stroke-dasharray="1 1"/>
<path d="M11.5 696 V716 M118.5 696 V716 M130.5 696 V716" stroke="#4a4a4a" stroke-width="1" stroke-dasharray="1 1"/>
</svg>
<div class="a" style="left:0;top:616px;width:131px;height:20px;background:#dcdfe4"></div><svg style="left:118px;top:619px" width="8" height="10" viewBox="0 0 8 10"><path d="M1.5 4 L4 1.5 L6.5 4 M1.5 8 L4 5.5 L6.5 8" fill="none" stroke="#111" stroke-width="1.5"/></svg>
<div class="a" style="left:0;top:476px;width:131px;height:20px;background:#dcdfe4"></div><svg style="left:118px;top:479px" width="8" height="10" viewBox="0 0 8 10"><path d="M1.5 4 L4 1.5 L6.5 4 M1.5 8 L4 5.5 L6.5 8" fill="none" stroke="#111" stroke-width="1.5"/></svg>
<span class="t" style="left:18px;top:279px;color:#1a1a1a;word-spacing:1px">1 : 100</span>
<span class="t" style="left:14px;top:299px;color:#8a8a8a">100</span>
<span class="t" style="left:14px;top:319px;color:#1a1a1a">中等</span>
<span class="t" style="left:14px;top:339px;color:#1a1a1a">显示原状态</span>
<div class="a" style="left:13px;top:358px;width:103px;height:16px;background:#dcdcdc;border:1px solid #b4b4b4;box-sizing:content-box"></div><span class="t" style="left:47px;top:359px">编辑...</span>
<div class="a" style="left:13px;top:378px;width:103px;height:16px;background:#dcdcdc;border:1px solid #b4b4b4;box-sizing:content-box"></div><span class="t" style="left:47px;top:379px">编辑...</span>
<span class="t" style="left:14px;top:399px;color:#1a1a1a">建筑</span>
<div class="a" style="left:12px;top:417px;width:104px;height:17px;border:1px solid #111;background:#fff"></div><span class="t" style="left:14px;top:419px;color:#1a1a1a">按规程</span>
<span class="t" style="left:14px;top:439px;color:#1a1a1a">无</span>
<div class="a" style="left:15px;top:460px;width:11px;height:11px;border:1px solid #333;background:#fff"></div>
<div class="a" style="left:15px;top:500px;width:11px;height:11px;border:1px solid #333;background:#fff"></div>
<div class="a" style="left:15px;top:520px;width:11px;height:11px;border:1px solid #333;background:#fff"></div>
<div class="a" style="left:15px;top:540px;width:11px;height:11px;border:1px solid #333;background:#fff"></div>
<div class="a" style="left:15px;top:560px;width:11px;height:11px;border:1px solid #333;background:#fff"></div>
<span class="t" style="left:14px;top:579px;color:#8a8a8a">304800.0</span>
<div class="a" style="left:15px;top:600px;width:11px;height:11px;border:1px solid #333;background:#fff"></div>
<div class="a" style="left:13px;top:638px;width:103px;height:16px;background:#dcdcdc;border:1px solid #b4b4b4;box-sizing:content-box"></div><span class="t" style="left:47px;top:639px">编辑...</span>
<div class="a" style="left:15px;top:660px;width:11px;height:11px;border:1px solid #d4d4d4;background:#fff"></div>
<div class="a" style="left:15px;top:680px;width:11px;height:11px;border:1px solid #d4d4d4;background:#fff"></div>
<span class="t" style="left:14px;top:699px;color:#1a1a1a">4376.2</span>
<div class="a" style="left:0;top:356px;width:11px;height:20px;overflow:hidden"><span class="t" style="left:-4px;top:3px">换</span></div>
<div class="a" style="left:0;top:436px;width:11px;height:20px;overflow:hidden"><span class="t" style="left:-1px;top:3px">式</span></div></div>

<!-- VIEWPORT -->
<div class="a" style="left:137px;top:136px;width:924px;height:578px;background:#fdfdfd;border-left:2px solid #767676;border-top:2px solid #767676;box-sizing:border-box;"></div>
<svg width="1061" height="714" style="left:0;top:0" viewBox="0 0 1061 714">
<defs><clipPath id="vp"><rect x="139" y="138" width="922" height="576"/></clipPath></defs>
<g clip-path="url(#vp)" shape-rendering="crispEdges">
<polygon points="376,423 563,411 586,522 586,651 399.5,663 376,550" fill="#fcd6b0"/>
<g stroke="#f9ab60" stroke-width="1" fill="none">
<path d="M376 550 L562.5 541 L586 651 M563 411 L562.5 541"/>
</g>
<rect x="599.5" y="540.5" width="154" height="190" fill="#c0c0c0" stroke="#000" stroke-width="1"/>
<line x1="615.5" y1="540" x2="615.5" y2="714" stroke="#000" stroke-width="1"/>
<polygon points="388.5,283 907,251.5 965,528.5 446.5,560.5" fill="#c0c0c0" stroke="#000" stroke-width="1.2" stroke-linejoin="miter"/>
<polygon points="416,420.4 563,411 586,520 586,552 562.7,448.6 424.3,456" fill="#ffb266" fill-opacity="0.5"/>
<g stroke="#f9ab60" stroke-width="1" fill="none">
<path d="M376 423 L563 411 L586 522 L586 651 L399.5 663 L376 550 Z"/>
<path d="M376 423 L399.5 534 L586 522 M399.5 534 L399.5 663 M563 411 L563 449"/>
</g>
</g>
</svg>
</body></html>
